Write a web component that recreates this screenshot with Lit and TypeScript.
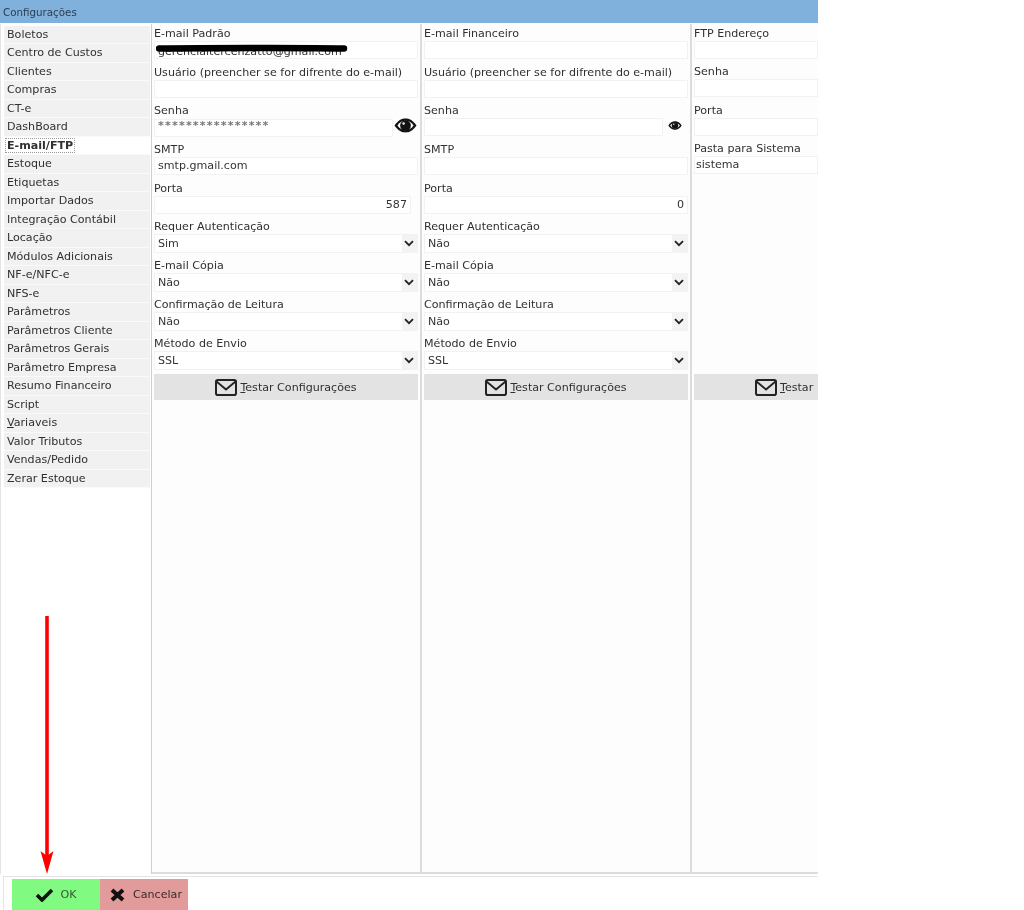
import { LitElement, html, css, svg } from "lit";
import { customElement } from "lit/decorators.js";

const MENU = ["Boletos","Centro de Custos","Clientes","Compras","CT-e","DashBoard","E-mail/FTP","Estoque","Etiquetas","Importar Dados","Integração Contábil","Locação","Módulos Adicionais","NF-e/NFC-e","NFS-e","Parâmetros","Parâmetros Cliente","Parâmetros Gerais","Parâmetro Empresa","Resumo Financeiro","Script","Variaveis","Valor Tributos","Vendas/Pedido","Zerar Estoque"];

const mail = svg`<svg class="mail" width="22" height="17" viewBox="0 0 22 17"><rect x="1" y="1" width="20" height="15" rx="1.8" fill="none" stroke="#222" stroke-width="2"/><path d="M1.5 2.5 L11 10.5 L20.5 2.5" fill="none" stroke="#222" stroke-width="1.8"/></svg>`;
const eyeIcon = (w: number, h: number) => svg`<svg width="${w}" height="${h}" viewBox="0 0 24 15"><path d="M0.5 7.5 C5 1.5 8 0.3 12 0.3 C16 0.3 19 1.5 23.5 7.5 C19 13.5 16 14.7 12 14.7 C8 14.7 5 13.5 0.5 7.5Z" fill="#111"/><path d="M3.6 7.5 C6 4 9 2.6 12 2.6 C15 2.6 18 4 20.4 7.5 C18 11 15 12.4 12 12.4 C9 12.4 6 11 3.6 7.5Z" fill="#fff"/><circle cx="12" cy="7.5" r="5.6" fill="#111"/><circle cx="10" cy="5.4" r="1.3" fill="#eee"/></svg>`;
const chev = svg`<svg width="10" height="7" viewBox="0 0 10 7"><path d="M1 1.2 L5 5.2 L9 1.2" fill="none" stroke="#222" stroke-width="1.8"/></svg>`;

@customElement("app-root")
export class AppRoot extends LitElement {
  static styles = css`
    :host { display: block; width: 1024px; height: 910px; position: relative; overflow: hidden; background: #fff;
      font-family: "DejaVu Sans", sans-serif; font-size: 11.1px; color: #303030; filter: blur(0.35px); }
    .win { width: 818px; height: 910px; display: flex; flex-direction: column; background: #fff; }
    .title { height: 23px; flex: none; background: #80b0dc; padding-left: 3px; line-height: 24px; font-size: 10.3px; color: #2c3e50; }
    .body { flex: none; height: 850px; display: flex; border-left: 1px solid #e4e4e4; margin-top: 1px; }
    .menu { width: 151px; flex: none; padding: 1.5px 0 0 3px; box-sizing: border-box; border-right: 1px solid #cfcfcf; background:#fff; }
    .item { height: 18.52px; line-height: 18px; width: 146px; box-sizing: border-box; padding-left: 3px; background: #f1f1f1; border-bottom: 1px solid #fafafa; white-space: nowrap; }
    .item.sel { background: #fff; margin-left: -1px; width: 147px; padding-left: 4px; }
    .item.sel span { font-weight: 700; outline: 1px dotted #999; padding: 0 1px; margin-left: -1px; }
    .u { text-decoration: underline; }
    .col { width: 270px; flex: none; box-sizing: border-box; background: #fdfdfd; border-right: 2px solid #dcdcdc; border-bottom: 2px solid #dcdcdc; padding: 2px 2px 0 2px; }
    .col.last { width: 126px; border-right: none; padding-right: 0; }
    .field { height: 38.7px; }
    .col.last .field { height: 38.3px; }
    .lab { height: 15px; line-height: 16px; white-space: nowrap; }
    .row { display: flex; align-items: center; }
    .inp { flex: 1; min-width: 0; height: 18px; box-sizing: border-box; background: #fff; border: 1px solid #f2f2f2; padding: 0 3px; line-height: 16px; position: relative; white-space: nowrap; color: #333; }
    .hid { line-height: 19px; }
    .col.last .inp { padding-left: 1px; }
    .num { text-align: right; padding-right: 3px; }
    .short { margin-right: 7px; }
    .pw { letter-spacing: 1.17px; font-weight: 700; line-height: 11px; color: #777; }
    .eye { width: 24px; flex: none; display: flex; justify-content: center; align-items: center; margin: 0 1px 4px 0; }
    .scrib { position: absolute; left: 1px; top: 2px; }
    .sel2 { flex: 1; height: 19px; box-sizing: border-box; background: #fff; border: 1px solid #f2f2f2; padding: 0 0 0 3px; display: flex; justify-content: space-between; align-items: center; color: #333; }
    .arrow { width: 15px; height: 17px; box-sizing: border-box; padding-right: 2px; background: #f3f3f3; display: flex; align-items: center; justify-content: center; }
    .btn { height: 26px; background: #e3e3e3; display: flex; align-items: center; justify-content: center; gap: 3px; white-space: nowrap; }
    .mail { flex: none; }
    .col.last .btn { margin-top: 195px; justify-content: flex-start; padding-left: 61px; }
    .foot { flex: none; height: 34px; margin: 2px 0 0 3px; border: 1px solid #e4e4e4; border-right: none; border-bottom: none; padding: 2px 0 0 8px; display: flex; }
    .b { width: 88px; height: 31px; display: flex; align-items: center; justify-content: center; gap: 6px; }
    .ok { background: #80fa80; color: #2f5a2f; }
    .no { background: #e29b9b; color: #3a2a2a; gap: 8px; padding-left: 4px; box-sizing: border-box; }
    .red { position: absolute; left: 39.5px; top: 616px; }
  `;

  private field(label: string, control: unknown) {
    return html`<div class="field"><div class="lab">${label}</div><div class="row">${control}</div></div>`;
  }
  private select(v: string) {
    return html`<div class="sel2"><span>${v}</span><span class="arrow">${chev}</span></div>`;
  }
  private column(first: string, mailVal: unknown, pw: string, eye: [number, number], smtp: string, port: string, auth: string, short: boolean) {
    return html`<div class="col">
      ${this.field(first, html`<div class="inp ${short ? "hid" : ""}">${mailVal}</div>`)}
      ${this.field("Usuário (preencher se for difrente do e-mail)", html`<div class="inp"></div>`)}
      ${this.field("Senha", html`<div class="inp pw">${pw}</div><div class="eye">${eyeIcon(eye[0], eye[1])}</div>`)}
      ${this.field("SMTP", html`<div class="inp">${smtp}</div>`)}
      ${this.field("Porta", html`<div class="inp num ${short ? "short" : ""}">${port}</div>`)}
      ${this.field("Requer Autenticação", this.select(auth))}
      ${this.field("E-mail Cópia", this.select("Não"))}
      ${this.field("Confirmação de Leitura", this.select("Não"))}
      ${this.field("Método de Envio", this.select("SSL"))}
      <div class="btn">${mail}<span><span class="u">T</span>estar Configurações</span></div>
    </div>`;
  }

  render() {
    const hidden = html`gerencialtercenzatto@gmail.com<svg class="scrib" width="194" height="12" viewBox="0 0 194 12"><path d="M3 4.5 C40 4 150 3.5 188 4.5" fill="none" stroke="#000" stroke-width="6.5" stroke-linecap="round"/></svg>`;
    return html`<div class="win">
      <div class="title">Configurações</div>
      <div class="body">
        <div class="menu">
          ${MENU.map((m) => m === "E-mail/FTP"
            ? html`<div class="item sel"><span>${m}</span></div>`
            : m === "Variaveis"
            ? html`<div class="item"><span class="u">V</span>ariaveis</div>`
            : html`<div class="item">${m}</div>`)}
        </div>
        ${this.column("E-mail Padrão", hidden, "****************", [23, 15], "smtp.gmail.com", "587", "Sim", true)}
        ${this.column("E-mail Financeiro", "", "", [14, 9], "", "0", "Não", false)}
        <div class="col last">
          ${this.field("FTP Endereço", html`<div class="inp"></div>`)}
          ${this.field("Senha", html`<div class="inp"></div>`)}
          ${this.field("Porta", html`<div class="inp"></div>`)}
          ${this.field("Pasta para Sistema", html`<div class="inp">sistema</div>`)}
          <div class="btn">${mail}<span><span class="u">T</span>estar</span></div>
        </div>
      </div>
      <div class="foot">
        <div class="b ok"><svg width="19" height="14" viewBox="0 0 19 14"><path d="M2 7 L7 12 L17 2" fill="none" stroke="#111" stroke-width="3.6"/></svg><span>OK</span></div>
        <div class="b no"><svg width="15" height="14" viewBox="0 0 15 14"><path d="M2 2 L13 12 M13 2 L2 12" fill="none" stroke="#111" stroke-width="4"/></svg><span>Cancelar</span></div>
      </div>
    </div>
    <svg class="red" width="14" height="258" viewBox="0 0 14 258"><path d="M7 1 V242" stroke="#f00" stroke-width="3.6" stroke-linecap="round"/><path d="M0.5 235 L7 240 L13.5 235 L7 258Z" fill="#f00"/></svg>`;
  }
}
